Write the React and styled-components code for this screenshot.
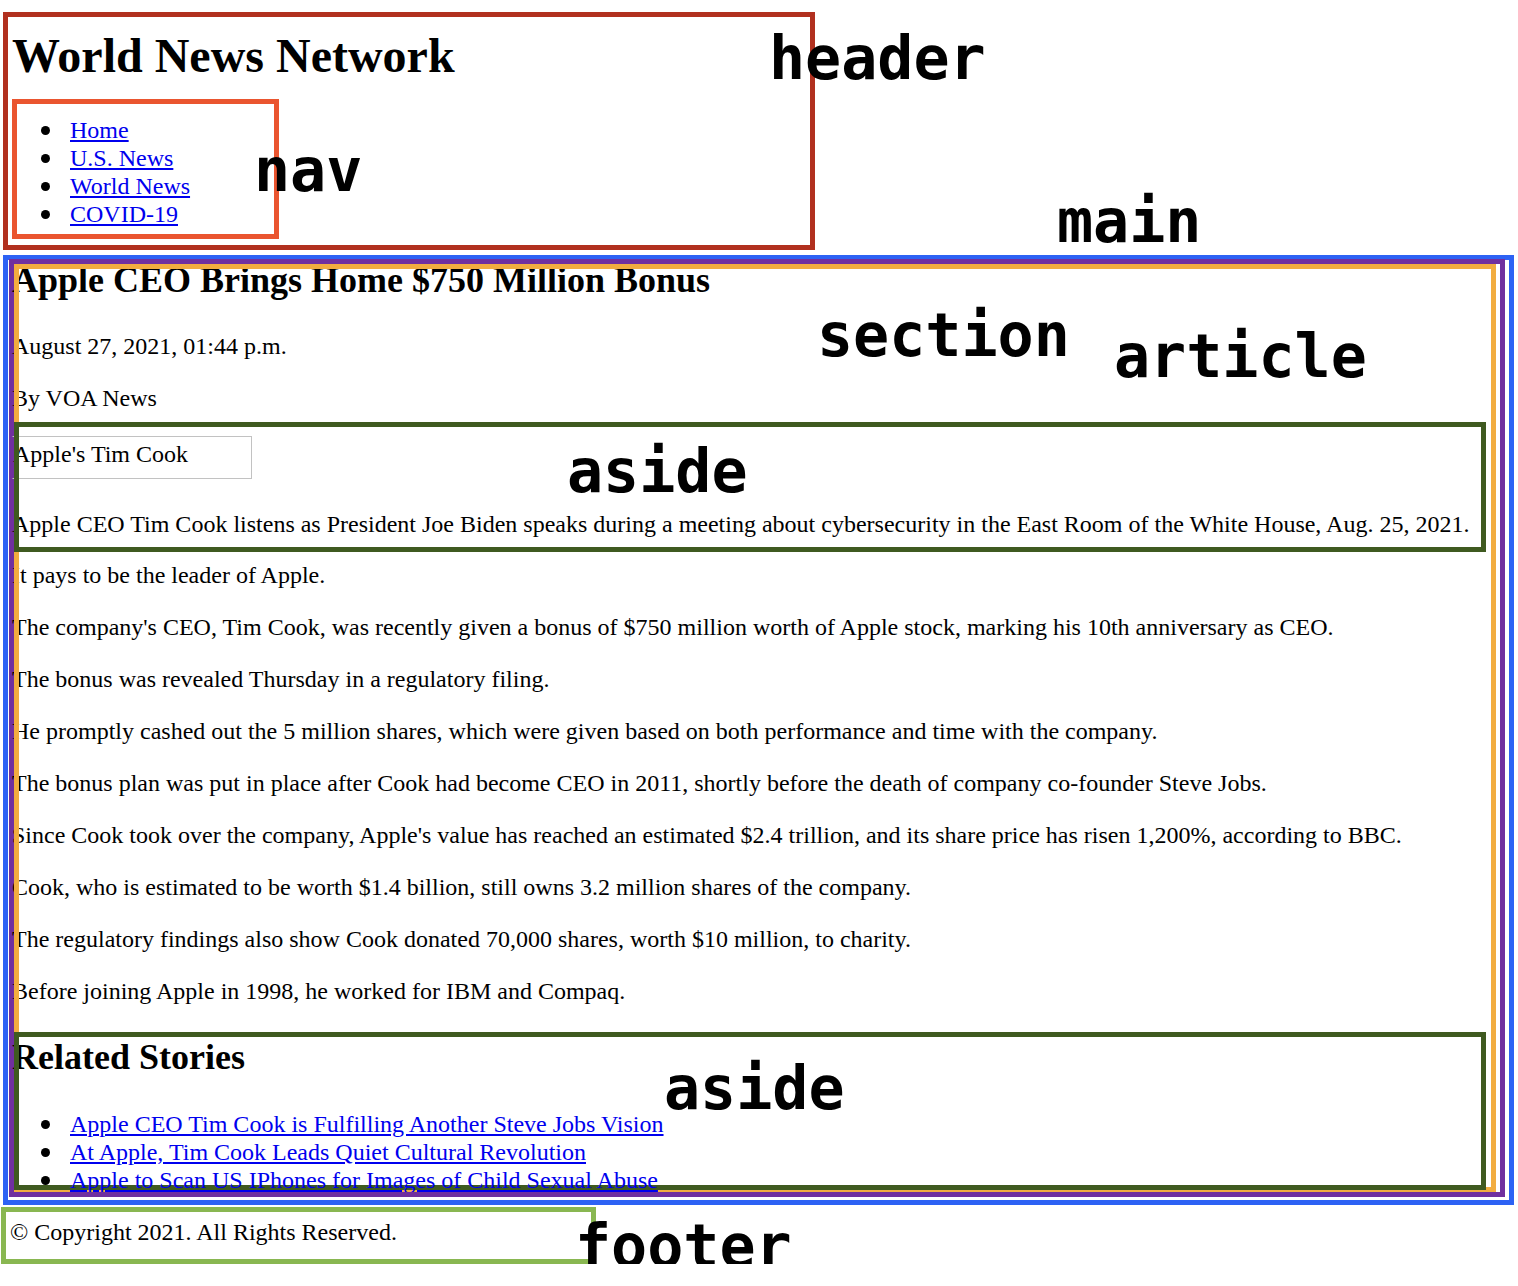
import React from 'react'
import styled, { createGlobalStyle } from 'styled-components'

const GlobalStyle = createGlobalStyle`
  html, body {
    margin: 0;
    padding: 0;
    background: #fff;
    overflow: hidden;
  }
  body {
    font-family: "Liberation Serif", "Times New Roman", serif;
    font-size: 24px;
    line-height: 28px;
    color: #000;
  }
  a {
    color: #0000ee;
  }
`

const paragraphs = [
  'It pays to be the leader of Apple.',
  "The company's CEO, Tim Cook, was recently given a bonus of $750 million worth of Apple stock, marking his 10th anniversary as CEO.",
  'The bonus was revealed Thursday in a regulatory filing.',
  'He promptly cashed out the 5 million shares, which were given based on both performance and time with the company.',
  'The bonus plan was put in place after Cook had become CEO in 2011, shortly before the death of company co-founder Steve Jobs.',
  "Since Cook took over the company, Apple's value has reached an estimated $2.4 trillion, and its share price has risen 1,200%, according to BBC.",
  'Cook, who is estimated to be worth $1.4 billion, still owns 3.2 million shares of the company.',
  'The regulatory findings also show Cook donated 70,000 shares, worth $10 million, to charity.',
  'Before joining Apple in 1998, he worked for IBM and Compaq.',
]

const navLinks = ['Home', 'U.S. News', 'World News', 'COVID-19']

const related = [
  'Apple CEO Tim Cook is Fulfilling Another Steve Jobs Vision',
  'At Apple, Tim Cook Leads Quiet Cultural Revolution',
  'Apple to Scan US IPhones for Images of Child Sexual Abuse',
]

export default function App() {
  return (
    <Page>
      <GlobalStyle />
      <Header>
        <SiteTitle>World News Network</SiteTitle>
        <Nav>
          <LinkList>
            {navLinks.map((l) => (
              <Item key={l}><a href="#">{l}</a></Item>
            ))}
          </LinkList>
          <Tag $x={242} $y={41}>nav</Tag>
        </Nav>
        <Tag $x={766} $y={16}>header</Tag>
      </Header>

      <Main>
        <Section>
          <Article>
            <Headline>Apple CEO Brings Home $750 Million Bonus</Headline>
            <Meta>
              <Para>August 27, 2021, 01:44 p.m.</Para>
              <Para>By VOA News</Para>
            </Meta>

            <PhotoAside>
              <PhotoAlt>Apple's Tim Cook</PhotoAlt>
              <Para>
                Apple CEO Tim Cook listens as President Joe Biden speaks during a meeting about cybersecurity in the East Room of the White House, Aug. 25, 2021.
              </Para>
              <Tag $x={555} $y={21}>aside</Tag>
            </PhotoAside>

            <Story>
              {paragraphs.map((t, i) => (
                <Para key={i}>{t}</Para>
              ))}
            </Story>

            <RelatedAside>
              <RelatedTitle>Related Stories</RelatedTitle>
              <LinkList>
                {related.map((r) => (
                  <Item key={r}><a href="#">{r}</a></Item>
                ))}
              </LinkList>
              <Tag $x={652} $y={28}>aside</Tag>
            </RelatedAside>
            <Tag $x={1102} $y={64}>article</Tag>
          </Article>
          <Tag $x={805} $y={43}>section</Tag>
        </Section>
        <Tag $x={1054} $y={-64}>main</Tag>
      </Main>

      <Footer>
        © Copyright 2021. All Rights Reserved.
        <Tag $x={574} $y={9}>footer</Tag>
      </Footer>
    </Page>
  )
}

const Page = styled.div`
  display: flex;
  flex-direction: column;
  align-items: flex-start;
  width: 1518px;
  padding-top: 12px;
`

// big monospace element name laid over each outlined box
const Tag = styled.span`
  position: absolute;
  left: ${(p) => p.$x}px;
  top: ${(p) => p.$y}px;
  font-family: "DejaVu Sans Mono", "Liberation Mono", monospace;
  font-weight: bold;
  font-size: 60px;
  line-height: 60px;
  color: #000;
  white-space: nowrap;
`

const Header = styled.header`
  position: relative;
  display: flex;
  flex-direction: column;
  gap: 16px;
  box-sizing: border-box;
  width: 812px;
  margin-left: 3px;
  padding: 16px 0 11px 9px;
  outline: 5px solid #b1301f;
  outline-offset: -5px;
`

const SiteTitle = styled.h1`
  margin: 0;
  font-size: 48px;
  line-height: 55px;
  font-weight: bold;
`

const Nav = styled.nav`
  position: relative;
  box-sizing: border-box;
  width: 267px;
  padding: 17px 0 11px;
  outline: 5px solid #ea552f;
  outline-offset: -5px;
`

const LinkList = styled.ul`
  display: flex;
  flex-direction: column;
  margin: 0;
  padding-left: 58px;
  list-style: none;
`

const Item = styled.li`
  position: relative;

  &::before {
    content: "";
    position: absolute;
    left: -29px;
    top: 10px;
    width: 9px;
    height: 9px;
    border-radius: 50%;
    background: #000;
  }
`

const Main = styled.main`
  position: relative;
  display: flow-root;
  box-sizing: border-box;
  width: 1511px;
  margin: 5px 0 0 3px;
  padding: 7px 12px 11px 9px;
  outline: 5px solid #2d62f4;
  outline-offset: -5px;
`

const Section = styled.section`
  position: relative;
  display: flow-root;
  padding-right: 4px;
  outline: 5px solid #70309f;
  outline-offset: -2px;
`

const Article = styled.article`
  position: relative;
  display: flex;
  flex-direction: column;
  padding-bottom: 2px;
  outline: 5px solid #f2ad40;
  outline-offset: -7px;
`

const Headline = styled.h2`
  margin: 0 0 34px;
  font-size: 36px;
  line-height: 36px;
  font-weight: bold;
`

const Meta = styled.div`
  display: flex;
  flex-direction: column;
  gap: 24px;
  margin-bottom: 8px;
`

const Story = styled.div`
  display: flex;
  flex-direction: column;
  gap: 24px;
  margin-bottom: 25px;
`

const Para = styled.p`
  margin: 0;
`

const Aside = styled.aside`
  position: relative;
  display: flex;
  flex-direction: column;
  align-items: flex-start;
  box-sizing: border-box;
  margin-right: 10px;
  outline: 5px solid #3f5a20;
  outline-offset: -7px;
`

const PhotoAside = styled(Aside)`
  gap: 31px;
  padding: 16px 0 16px;
  margin-bottom: 7px;
`

const PhotoAlt = styled.span`
  box-sizing: border-box;
  width: 240px;
  height: 43px;
  padding-top: 3px;
  border: 1px solid #c2c2c2;
  border-left-color: transparent;
`

const RelatedAside = styled(Aside)`
  gap: 35px;
  height: 162px;
  padding-top: 9px;
  overflow: hidden;
`

const RelatedTitle = styled.h2`
  margin: 0;
  font-size: 36px;
  line-height: 36px;
  font-weight: bold;
`

const Footer = styled.footer`
  position: relative;
  box-sizing: border-box;
  width: 595px;
  margin: 2px 0 0 1px;
  padding: 11px 0 18px 9px;
  outline: 5px solid #89b751;
  outline-offset: -5px;
`
